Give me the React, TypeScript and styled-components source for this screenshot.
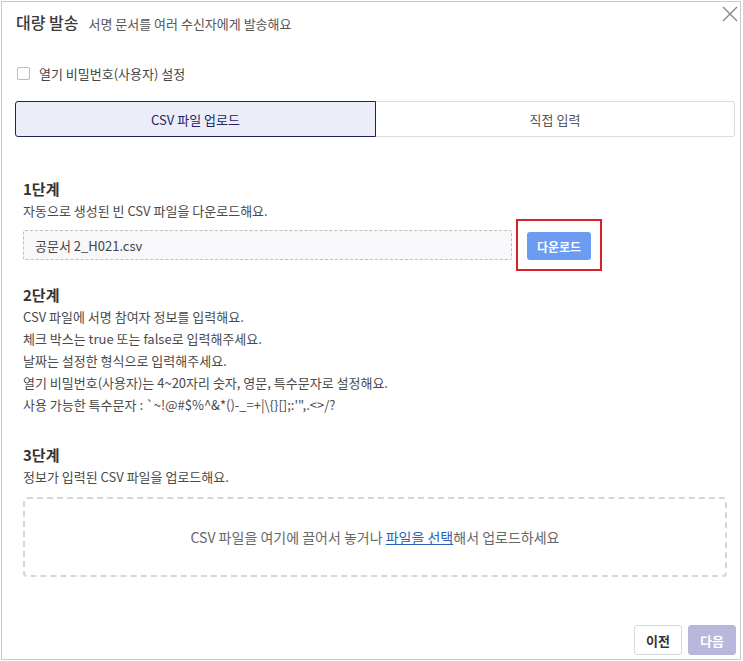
import styled, { createGlobalStyle } from 'styled-components';

/* ── Global ── */
const Global = createGlobalStyle`
  html, body { margin: 0; padding: 0; background: #fff; }
  body {
    font-family: 'Noto Sans CJK KR', 'Noto Sans', sans-serif;
    color: #333;
  }
`;

/* ── Modal frame ── */
const Modal = styled.div`
  box-sizing: border-box;
  width: 740px;
  height: 659px;
  margin: 1px 0 0 1px;
  border: 1px solid #c9c9c9;
  display: flex;
  flex-direction: column;
  background: #fff;
`;

/* ── Header ── */
const Header = styled.div`
  display: flex;
  align-items: flex-start;
  justify-content: space-between;
  padding: 0 2px 0 14px;
`;

const TitleLine = styled.div`
  margin-top: 10px;
  display: flex;
  align-items: baseline;
  gap: 10px;
  line-height: 20px;
`;

const Title = styled.span`
  font-size: 16px;
  font-weight: 500;
  color: #3a3a3a;
`;

const SubTitle = styled.span`
  font-size: 13px;
  color: #555;
`;

const CloseBtn = styled.button`
  margin-top: 4px;
  width: 16px;
  height: 16px;
  padding: 0;
  border: none;
  background: transparent;
  cursor: pointer;
  display: flex;
`;

/* ── Password option ── */
const OptionRow = styled.label`
  margin: 29px 0 0 15px;
  display: flex;
  align-items: center;
  gap: 9px;
  height: 20px;
  font-size: 13px;
  color: #444;
`;

const CheckBox = styled.span`
  box-sizing: border-box;
  width: 13px;
  height: 13px;
  border: 1px solid #bdbdbd;
  border-radius: 2px;
  background: #fff;
`;

/* ── Tabs ── */
const Tabs = styled.div`
  margin: 18px 5px 0 13px;
  display: grid;
  grid-template-columns: 361px 1fr;
  height: 36px;
`;

const Tab = styled.button<{ $active?: boolean }>`
  box-sizing: border-box;
  height: 36px;
  font-family: inherit;
  font-size: 13px;
  cursor: pointer;
  background: ${p => (p.$active ? '#ebedf8' : '#fff')};
  color: ${p => (p.$active ? '#25236a' : '#555')};
  border: 1px solid ${p => (p.$active ? '#22205a' : '#dcdcdc')};
  border-left-width: ${p => (p.$active ? '1px' : '0')};
  border-radius: ${p => (p.$active ? '3px 0 0 3px' : '0 3px 3px 0')};
`;

/* ── Steps ── */
const Steps = styled.div`
  padding: 0 13px 0 21px;
  display: flex;
  flex-direction: column;
`;

const StepTitle = styled.div<{ $gap: number }>`
  margin-top: ${p => p.$gap}px;
  font-size: 15px;
  font-weight: 700;
  color: #333;
  line-height: 22px;
`;

const StepText = styled.div`
  font-size: 13px;
  color: #4a4a4a;
  line-height: 22px;
`;

const FileRow = styled.div`
  margin-top: 8px;
  height: 30px;
  display: flex;
  align-items: center;
  gap: 15px;
`;

const FileName = styled.div`
  box-sizing: border-box;
  width: 489px;
  height: 30px;
  padding: 0 11px;
  display: flex;
  align-items: center;
  border: 1px dashed #bfbfbf;
  border-radius: 2px;
  background: #f8f8fa;
  font-size: 13px;
  color: #444;
`;

/* red highlight box drawn around the button, overlapping the row */
const Highlight = styled.div`
  margin: -1px 0 -1px -11px;
  padding: 11px 9px 9px 9px;
  border: 2px solid #d7202a;
  display: flex;
`;

const DownloadBtn = styled.button`
  width: 64px;
  height: 28px;
  border: none;
  border-radius: 3px;
  background: #6b9cf2;
  color: #fff;
  font-family: inherit;
  font-size: 12px;
  font-weight: 700;
  cursor: pointer;
`;

const DropZone = styled.div`
  box-sizing: border-box;
  margin-top: 9px;
  height: 80px;
  border: 2px dashed #d6d6d6;
  border-radius: 4px;
  display: flex;
  align-items: center;
  justify-content: center;
  font-size: 14px;
  color: #666;
`;

const PickLink = styled.a`
  color: #2a5fb8;
  text-decoration: underline;
  cursor: pointer;
`;

/* ── Footer ── */
const Footer = styled.div`
  margin-top: auto;
  padding: 0 4px 4px 0;
  display: flex;
  justify-content: flex-end;
  gap: 6px;
`;

const FooterBtn = styled.button<{ $primary?: boolean }>`
  box-sizing: border-box;
  width: 48px;
  height: 30px;
  border-radius: 3px;
  font-family: inherit;
  font-size: 13px;
  font-weight: 700;
  cursor: pointer;
  background: ${p => (p.$primary ? '#b8b7dc' : '#fff')};
  color: ${p => (p.$primary ? '#fff' : '#333')};
  border: 1px solid ${p => (p.$primary ? '#b8b7dc' : '#d8d8d8')};
`;

const guideLines = [
  'CSV 파일에 서명 참여자 정보를 입력해요.',
  '체크 박스는 true 또는 false로 입력해주세요.',
  '날짜는 설정한 형식으로 입력해주세요.',
  '열기 비밀번호(사용자)는 4~20자리 숫자, 영문, 특수문자로 설정해요.',
  '사용 가능한 특수문자 : `~!@#$%^&*()-_=+|\\{}[];:\'",.<>/?',
];

export default function App() {
  return (
    <>
      <Global />
      <Modal>
        <Header>
          <TitleLine>
            <Title>대량 발송</Title>
            <SubTitle>서명 문서를 여러 수신자에게 발송해요</SubTitle>
          </TitleLine>
          <CloseBtn aria-label="닫기">
            <svg width="16" height="16" viewBox="0 0 16 16">
              <path d="M1 1L15 15M15 1L1 15" stroke="#858585" strokeWidth="1.4" />
            </svg>
          </CloseBtn>
        </Header>

        <OptionRow>
          <CheckBox />
          열기 비밀번호(사용자) 설정
        </OptionRow>

        <Tabs>
          <Tab $active>CSV 파일 업로드</Tab>
          <Tab>직접 입력</Tab>
        </Tabs>

        <Steps>
          <StepTitle $gap={41}>1단계</StepTitle>
          <StepText>자동으로 생성된 빈 CSV 파일을 다운로드해요.</StepText>
          <FileRow>
            <FileName>공문서 2_H021.csv</FileName>
            <Highlight>
              <DownloadBtn>다운로드</DownloadBtn>
            </Highlight>
          </FileRow>

          <StepTitle $gap={24}>2단계</StepTitle>
          {guideLines.map(line => (
            <StepText key={line}>{line}</StepText>
          ))}

          <StepTitle $gap={28}>3단계</StepTitle>
          <StepText>정보가 입력된 CSV 파일을 업로드해요.</StepText>
          <DropZone>
            CSV 파일을 여기에 끌어서 놓거나&nbsp;<PickLink>파일을 선택</PickLink>해서 업로드하세요
          </DropZone>
        </Steps>

        <Footer>
          <FooterBtn>이전</FooterBtn>
          <FooterBtn $primary>다음</FooterBtn>
        </Footer>
      </Modal>
    </>
  );
}
